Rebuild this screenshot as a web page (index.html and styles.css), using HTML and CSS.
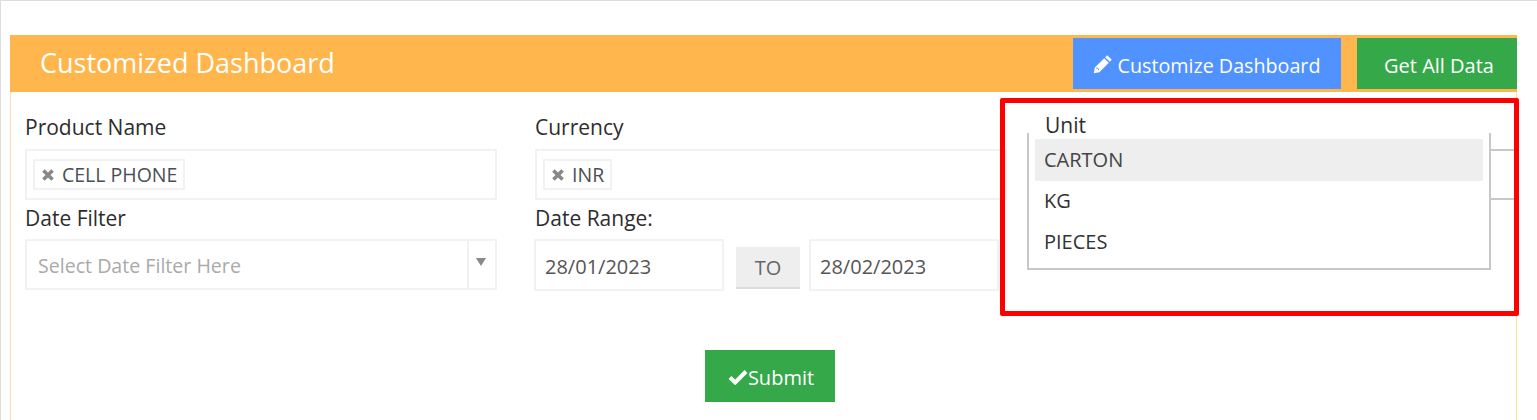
FILE: index.html
```html
<!DOCTYPE html>
<html lang="en">
<head>
  <meta charset="UTF-8" />
  <meta name="viewport" content="width=device-width, initial-scale=1.0" />
  <title>Customized Dashboard</title>
  <link rel="stylesheet" href="styles.css">
</head>
<body>
  <div class="frame">
    <div class="panel">
      <div class="panel-head">
        <h3 class="panel-title">Customized Dashboard</h3>
        <div class="head-actions">
          <button class="btn btn-blue">
            <svg class="icon-pencil" viewBox="0 0 20 20"><path d="M14.200 1.200l4.600 4.600-2 2-4.600-4.600zM11.200 4.200l4.600 4.600L6.400 18.200 0.800 19.200 1.800 13.600z" fill="currentColor"/><path d="M3.200 14.200l1.600 0 1 2" fill="none" stroke="#5092ff" stroke-width="1"/></svg>
            Customize Dashboard
          </button>
          <button class="btn btn-green btn-all">Get All Data</button>
        </div>
      </div>

      <div class="panel-body">
        <div class="filtros">
          <div class="campo">
            <label>Product Name</label>
            <div class="caja">
              <span class="tag"><svg class="tag-x" viewBox="0 0 10 10"><path d="M1.200 1.200l7.600 7.600M8.800 1.200l-7.600 7.600" stroke="currentColor" stroke-width="3" fill="none"/></svg>CELL PHONE</span>
            </div>
          </div>
          <div class="campo">
            <label>Currency</label>
            <div class="caja">
              <span class="tag"><svg class="tag-x" viewBox="0 0 10 10"><path d="M1.200 1.200l7.600 7.600M8.800 1.200l-7.600 7.600" stroke="currentColor" stroke-width="3" fill="none"/></svg>INR</span>
            </div>
          </div>
          <div class="campo campo-unit">
            <label>Unit</label>
            <div class="caja caja-activa"></div>
            <ul class="dropdown">
              <li class="activo">CARTON</li>
              <li>KG</li>
              <li>PIECES</li>
            </ul>
          </div>
          <div class="campo campo-bajo">
            <label>Date Filter</label>
            <div class="caja select">
              <span class="placeholder">Select Date Filter Here</span>
              <span class="flecha"></span>
            </div>
          </div>
          <div class="campo campo-bajo">
            <label>Date Range:</label>
            <div class="rango">
              <div class="fecha">28/01/2023</div>
              <div class="rango-to">TO</div>
              <div class="fecha">28/02/2023</div>
            </div>
          </div>
        </div>

        <div class="acciones">
          <button class="btn btn-green btn-submit">
            <svg class="icon-check" viewBox="0 0 20 16"><path d="M2 8.500l5.200 5L18 2.500" fill="none" stroke="currentColor" stroke-width="4"/></svg>Submit
          </button>
        </div>
      </div>
    </div>
    <div class="resaltado"></div>
  </div>
</body>
</html>
```

FILE: styles.css
```css
* {
  box-sizing: border-box;
}

body {
  margin: 0;
  padding: 0;
  background: white;
  font-family: "Open Sans", Arial, sans-serif;
  color: #333;
}

.frame {
  position: relative;
  height: 420px;
  overflow: hidden;
  border-top: 1px solid #ddd;
  border-left: 1px solid #ddd;
  padding: 34px 20px 0 9px;
}

.panel {
  height: 500px;
  border: 1px solid #ffdfa8;
  border-top: none;
}

.panel-head {
  display: flex;
  justify-content: space-between;
  align-items: center;
  height: 57px;
  margin: 0 -1px;
  padding: 0 0 0 30px;
  background: #ffb64d;
}

.panel-title {
  margin: 0 0 3px;
  font-size: 27px;
  font-weight: 400;
  color: white;
}

.head-actions {
  display: flex;
  gap: 16px;
}

.btn {
  display: flex;
  align-items: center;
  justify-content: center;
  height: 51px;
  border: none;
  border-radius: 0;
  color: white;
  font-family: inherit;
  font-size: 20px;
}

.btn-blue {
  width: 268px;
  padding: 3px 1px 0 0;
  font-size: 19.700px;
  background: #5092ff;
}

.btn-green {
  background: #35a84a;
}

.btn-all {
  width: 160px;
  padding: 3px 0 0 4px;
}

.icon-pencil {
  width: 20px;
  height: 20px;
  margin: 0 5px 2px 0;
}

.panel-body {
  padding: 17px 0 0 14px;
}

.filtros {
  display: grid;
  grid-template-columns: 472px 472px 472px;
  column-gap: 38px;
}

.campo {
  position: relative;
}

.campo label {
  display: block;
  height: 40px;
  padding-top: 5px;
  font-size: 21px;
  line-height: 27px;
  color: #2d2d2d;
}

.campo-unit label {
  padding-top: 3px;
}

.campo-bajo label {
  height: 39px;
}

.caja {
  display: flex;
  align-items: center;
  height: 51px;
  padding: 0 6px;
  border: 2px solid #f2f2f2;
  background: white;
}

.caja-activa {
  border: 2px solid #c8c8c8;
}

.tag {
  display: flex;
  align-items: center;
  height: 31px;
  padding: 0 6px 0 7px;
  border: 2px solid #f2f2f2;
  font-size: 19.500px;
  color: #4a4f55;
}

.tag-x {
  width: 12px;
  height: 12px;
  margin-right: 8px;
  color: #888;
}

.select {
  position: relative;
  padding: 2px 0 0 11px;
}

.placeholder {
  font-size: 19.600px;
  color: #aaa;
}

.flecha {
  position: absolute;
  top: 0;
  right: 0;
  bottom: 0;
  width: 28px;
  border-left: 2px solid #f2f2f2;
}

.flecha::after {
  content: "";
  position: absolute;
  top: 17px;
  left: 7px;
  border-left: 5px solid transparent;
  border-right: 5px solid transparent;
  border-top: 8px solid #888;
}

.rango {
  display: flex;
  align-items: flex-start;
  margin-left: -1px;
}

.fecha {
  display: flex;
  align-items: center;
  width: 190px;
  height: 52px;
  padding: 2px 0 0 9px;
  border: 2px solid #f2f2f2;
  font-size: 20px;
  color: #555;
}

.rango-to {
  display: flex;
  align-items: center;
  justify-content: center;
  width: 64px;
  height: 42px;
  margin: 8px 9px 0 12px;
  background: #eee;
  border-bottom: 2px solid #ddd;
  font-size: 20px;
  color: #666;
}

.acciones {
  display: flex;
  justify-content: center;
  margin-top: 59px;
  padding-right: 2px;
}

.btn-submit {
  width: 130px;
  height: 52px;
  padding: 2px 0 0 3px;
}

.icon-check {
  width: 20px;
  height: 16px;
}

/* lista abierta del campo Unit, encima del input */
.dropdown {
  position: absolute;
  top: 24px;
  left: -18px;
  width: 464px;
  margin: 0;
  padding: 6px 6px 6px;
  list-style: none;
  background: white;
  border: 2px solid #c8c8c8;
  border-top: none;
}

.dropdown li {
  height: 41px;
  line-height: 39px;
  padding-left: 9px;
  font-size: 20px;
  color: #333;
}

.dropdown li.activo {
  height: 42px;
  line-height: 42px;
  background: #eee;
  color: #444;
}

.dropdown li:last-child {
  height: 40px;
}

/* marca roja de la captura */
.resaltado {
  position: absolute;
  top: 97px;
  left: 999px;
  width: 519px;
  height: 218px;
  border: 5px solid #f00;
  border-radius: 2px;
}
```
